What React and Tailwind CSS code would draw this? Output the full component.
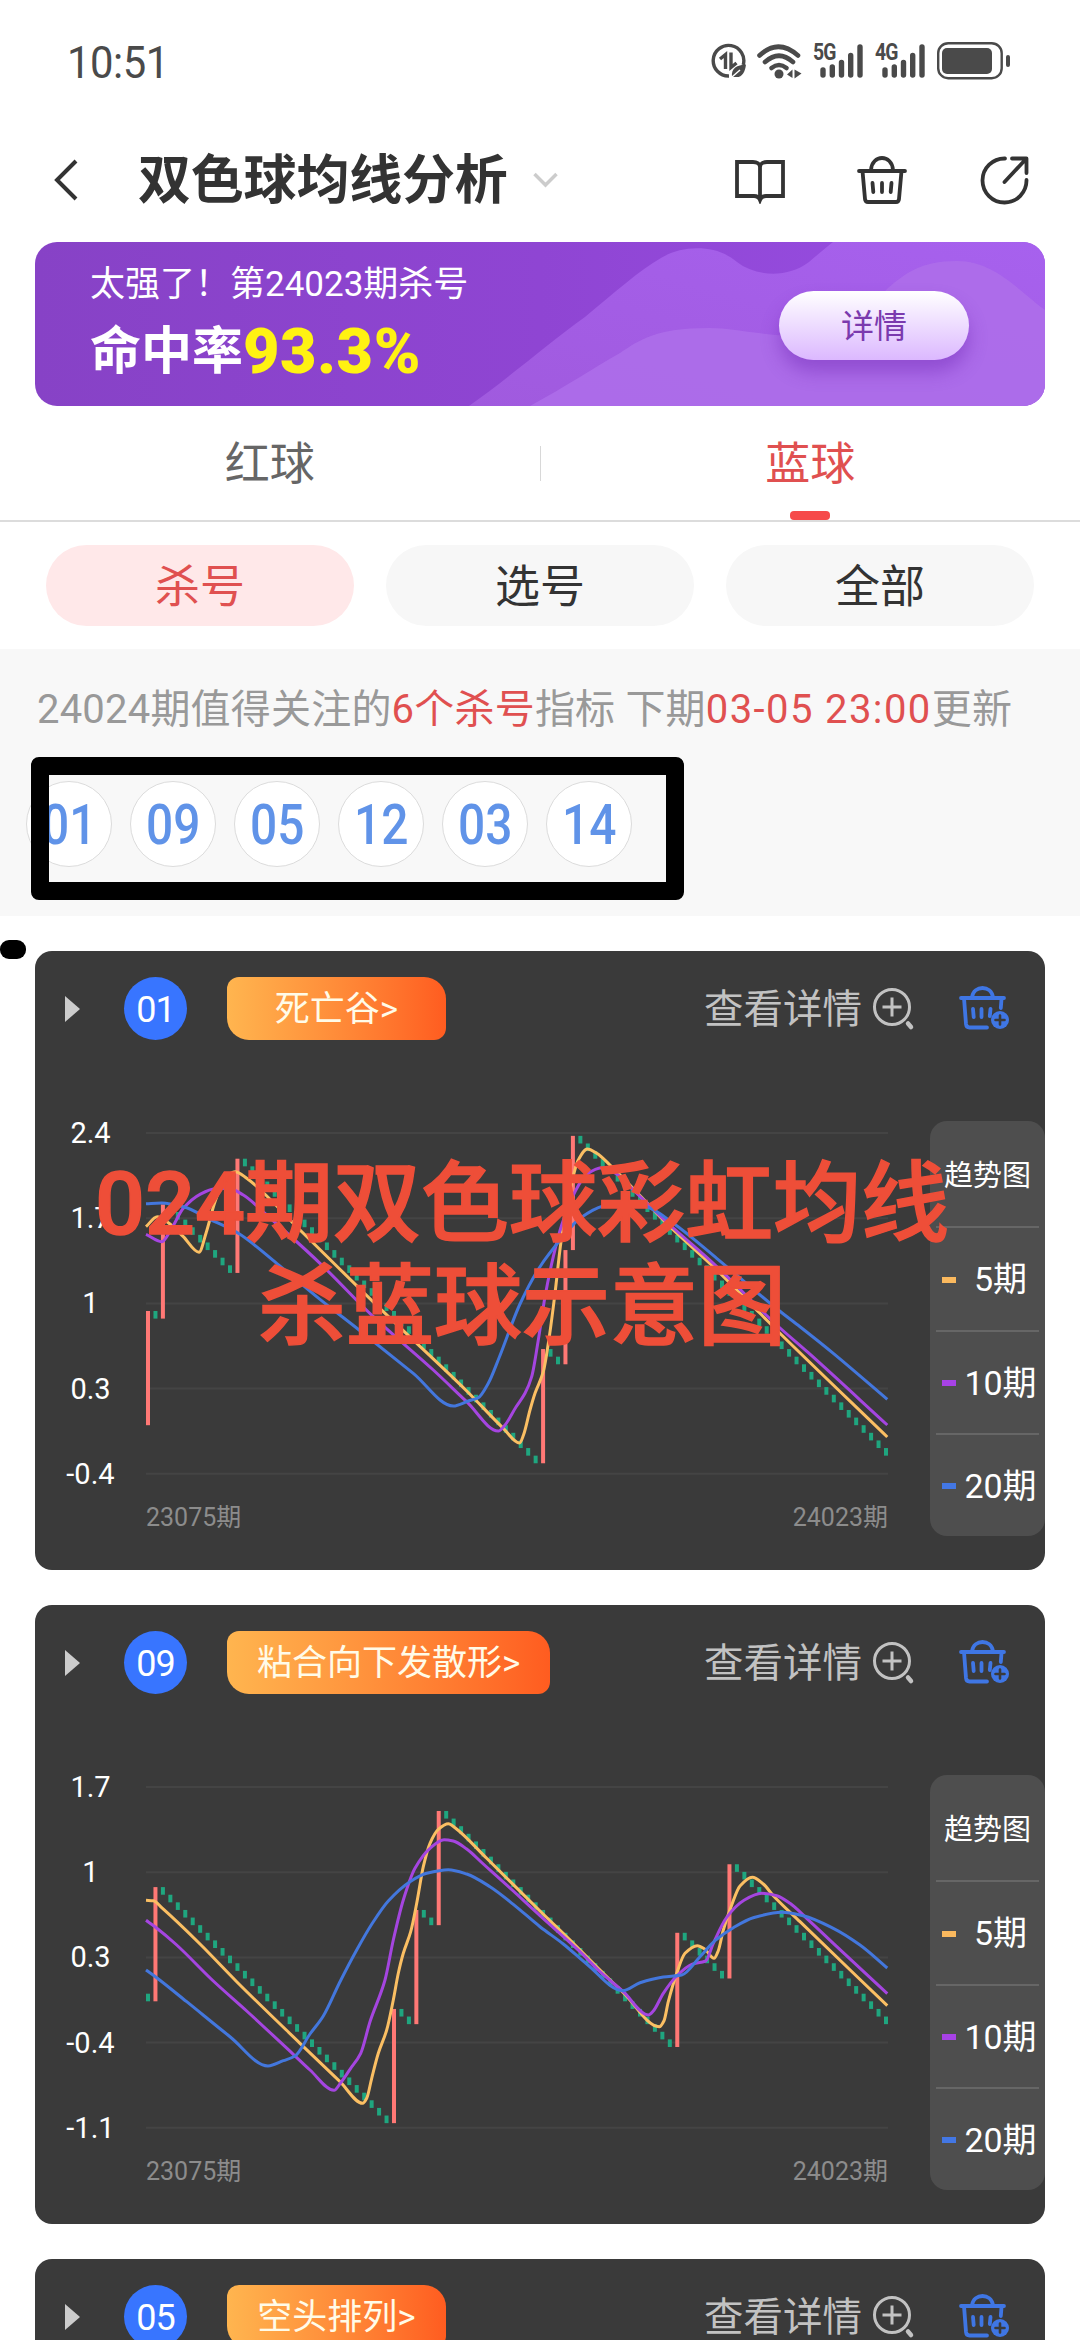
const RED = "#ff7875";
const GREEN = "#1fa67f";

// one miss lowers the line by 1/16, one hit raises it by 15/16
const STEP = 7.614;
const BAR_GAP = 7.4545;
const TOTAL = 100;

const charts = [
  {
    num: "01",
    tag: "死亡谷>",
    labels: ["2.4", "1.7", "1", "0.3", "-0.4"],
    open: 474.2,
    hits: [0, 2, 12, 53, 56, 57],
    ma5: [
      [146, 275.7], [157.3, 265.7], [168.3, 271.7], [183.3, 285.7], [199, 301.3], [206, 282.3], [215, 250.7],
      [225, 227.3], [235, 220.7], [246.7, 227.3], [300, 279], [383.3, 360.7], [466.7, 440], [503.3, 477.3],
      [519.5, 492], [523.5, 484], [530, 459], [535, 442.3], [543.3, 420.7], [549.3, 385.7], [555, 342.3],
      [561, 290.7], [570, 239], [578.3, 209], [587.3, 198], [596.7, 202.3], [610, 214], [670, 275.7],
      [713.3, 315.7], [760, 362.3], [781.7, 384], [887.3, 486],
    ],
    ma10: [
      [146, 283.3], [161.7, 290.7], [171.7, 277.3], [183.3, 257.3], [200, 243.3], [215, 237.7], [228.3, 237.3],
      [243.3, 244], [266.7, 264], [320, 312.3], [373.3, 365.7], [433.3, 419], [466.7, 450.7], [498.3, 480],
      [505, 474], [516, 456], [525, 442.3], [531.7, 425.7], [538.3, 389], [545, 345.7], [553.3, 305.7],
      [561.7, 274], [575, 240.7], [586.7, 223.3], [601.7, 216.7], [616.7, 223], [633.3, 239], [670, 274],
      [713.3, 312.3], [776.7, 374], [808.3, 401.7], [887.3, 474],
    ],
    ma20: [
      [146, 252.7], [161.7, 252], [183.3, 255.7], [210, 268.3], [238.3, 282.3], [276.7, 312.3], [320, 348.3],
      [360, 379.7], [413.3, 422.3], [453.3, 455], [468.3, 450], [478.3, 446.7], [488.3, 432.3], [499, 407],
      [520, 353], [540, 315.7], [561.7, 287.3], [580, 267.3], [603.3, 255], [623, 251.7], [646.7, 255.7],
      [673.3, 272.3], [716.7, 307.3], [778.3, 359], [800, 375.7], [833.3, 402.3], [887.3, 448.3],
    ],
  },
  {
    num: "09",
    tag: "粘合向下发散形>",
    labels: ["1.7", "1", "0.3", "-0.4", "-1.1"],
    open: 388.7,
    hits: [1, 33, 36, 39, 71, 78],
    ma5: [
      [146, 295.3], [153.3, 295.7], [161.7, 302.7], [200, 339], [236.7, 376.7], [300, 438.3], [340, 476.7],
      [362.7, 498.3], [366.7, 493.3], [371.7, 473.3], [378.3, 448.3], [386.7, 425], [393.3, 395], [398.3, 368.3],
      [403.3, 348.3], [410.7, 326.7], [416.7, 298.3], [423.3, 261.7], [430, 238.3], [438.3, 224.3],
      [448.3, 218.7], [455, 222.7], [486.7, 253.3], [540, 306], [573.3, 338.3], [600, 365], [623.3, 387.7],
      [659.3, 421.7], [664, 415.7], [668.3, 396.7], [676.7, 368.3], [685, 348.3], [697.3, 340.7],
      [705, 344.3], [714, 353.3], [718.3, 345.7], [723.3, 325], [731.7, 300], [740, 281], [752.3, 272.3],
      [763.3, 279], [773.3, 290.7], [800, 316.7], [887.3, 400.7],
    ],
    ma10: [
      [146, 315.3], [155, 321.7], [176.7, 340], [213.3, 376], [246.7, 406], [293.3, 449.3], [310, 465],
      [334, 485.3], [340.7, 477.7], [350, 464.3], [360.7, 448.3], [370, 416.7], [385, 375], [393.3, 335],
      [403.3, 295], [415, 263.3], [430, 243.3], [444, 234.7], [453.3, 236], [466.7, 244], [483.3, 259],
      [513.3, 286], [540, 310.7], [580, 346.7], [600, 366.7], [623.3, 386.7], [648.3, 410], [653.3, 406],
      [663.3, 388.3], [676.7, 371], [691.7, 359.3], [705.7, 356], [713.3, 338.3], [726.7, 312.3],
      [743.3, 295.7], [761.7, 288.3], [776.7, 290.7], [790, 298.3], [806.7, 313.3], [833.3, 338.3], [887.3, 388.7],
    ],
    ma20: [
      [146, 365], [156.7, 372.7], [186.7, 396.7], [230, 431.7], [268, 461], [283.3, 455.7], [295, 451],
      [310, 429], [323.3, 411], [340, 376.7], [356.7, 345], [371.7, 319.3], [388.3, 296], [410, 276.7],
      [426.7, 268.3], [448.3, 264.7], [466.7, 269], [490, 281.7], [513.3, 299.3], [540, 321.7], [563.3, 339],
      [586.7, 359], [622.7, 385.7], [640, 377.7], [663.3, 372], [681.7, 370], [700, 351.7], [715, 335.7],
      [733.3, 322.7], [753.3, 312.7], [781.7, 307.3], [803.3, 310.7], [833.3, 323.3], [860, 340], [887.3, 363],
    ],
  },
  // below the fold, only its header is visible
  {
    num: "05",
    tag: "空头排列>",
    labels: [],
    open: 300,
    hits: [20],
    ma5: [],
    ma10: [],
    ma20: [],
  },
];

const balls = ["01", "09", "05", "12", "03", "14"];

const getBars = (open, hits) => {
  const bars = [];
  let last = open;
  for (let i = 0; i < TOTAL; i++) {
    const hit = hits.includes(i);
    const close = hit ? last - STEP * 15 : last + STEP;
    bars.push({
      x: 146 + i * BAR_GAP,
      y: Math.min(last, close),
      h: Math.abs(close - last),
      color: hit ? RED : GREEN,
    });
    last = close;
  }
  return bars;
};

// smooth line, tangents limited by the shorter neighbour segment
const getPath = (pts) => {
  if (!pts.length) return "";
  let d = `M${pts[0][0]} ${pts[0][1]}`;
  const slope = (i) => {
    const a = pts[Math.max(0, i - 1)];
    const b = pts[Math.min(pts.length - 1, i + 1)];
    const p = pts[i];
    const s1 = (p[1] - a[1]) / (p[0] - a[0] || 1);
    const s2 = (b[1] - p[1]) / (b[0] - p[0] || 1);
    if (i === 0) return s2;
    if (i === pts.length - 1) return s1;
    return s1 * s2 <= 0 ? 0 : (2 * s1 * s2) / (s1 + s2);
  };
  for (let i = 0; i < pts.length - 1; i++) {
    const p = pts[i];
    const q = pts[i + 1];
    const dx = (q[0] - p[0]) / 3;
    d += `C${p[0] + dx} ${p[1] + slope(i) * dx} ${q[0] - dx} ${q[1] - slope(i + 1) * dx} ${q[0]} ${q[1]}`;
  }
  return d;
};

function SignalBars({ label }) {
  return (
    <div className="relative h-[36px] w-[50px]">
      <span className="absolute left-0 -top-[1px] text-[23px] leading-[22px] font-bold tracking-[-1px] origin-left scale-x-[0.84]">
        {label}
      </span>
      <svg className="absolute inset-0" width="50" height="36" viewBox="0 0 50 36">
        <g stroke="#4a4a4a" strokeWidth="5.4" strokeLinecap="round">
          <path d="M10 27v5M19.3 24v8M28.5 19.500v12.500M37.700 12.500v19.500M47 4v28" />
        </g>
      </svg>
    </div>
  );
}

function StatusBar() {
  return (
    <div className="flex h-[124px] shrink-0 items-center justify-between pl-[67px] pr-[69px] text-[#4a4a4a]">
      <span className="mt-[2px] text-[44px] tracking-[-0.5px] leading-none origin-left scale-x-[0.95]">10:51</span>
      <div className="flex items-center -mt-[2px]">
        <svg width="36" height="36" viewBox="0 0 36 36" fill="none" stroke="#4a4a4a">
          <path d="M18 33A15.300 15.300 0 1 1 32.200 22" strokeWidth="3.400" />
          <path d="M9 16l5.500-4.500V26M20 9.500v15l5.500-4.500" strokeWidth="3.400" />
          <path d="M21 34c-1-9 5-12 14-12.500-1 8-4 13.500-11 12.500z" fill="#4a4a4a" stroke="none" />
          <path d="M21 34l8-7" stroke="#fff" strokeWidth="1.500" />
        </svg>
        <svg className="ml-[9px]" width="46" height="36" viewBox="0 0 46 36" fill="none" stroke="#4a4a4a">
          <g strokeWidth="4.600" strokeLinecap="round">
            <path d="M3.500 12.500Q22 -5 42 12.500" />
            <path d="M9 19Q23 6.500 37 19" />
            <path d="M15.500 25Q23 19 30.500 25" />
          </g>
          <circle cx="23" cy="31" r="4.500" fill="#4a4a4a" stroke="none" />
          <path d="M31 31.500l5.500-5V35zM38.500 26.500l7 4-7 5z" fill="#4a4a4a" stroke="none" />
        </svg>
        <div className="ml-[11px]">
          <SignalBars label="5G" />
        </div>
        <div className="ml-[12px]">
          <SignalBars label="4G" />
        </div>
        <svg className="ml-[12px]" width="74" height="38" viewBox="0 0 74 38">
          <rect x="1.200" y="1.200" width="63.500" height="35" rx="10" fill="none" stroke="#4a4a4a" strokeWidth="2.400" />
          <rect x="5" y="6" width="50" height="26" rx="5" fill="#4a4a4a" />
          <rect x="69" y="13" width="4" height="12" rx="2" fill="#4a4a4a" />
        </svg>
      </div>
    </div>
  );
}

function Header() {
  return (
    <div className="flex h-[118px] shrink-0 items-center pb-[6px] pl-[52px] pr-[50px]">
      <svg width="28" height="44" viewBox="0 0 28 44" fill="none" stroke="#333" strokeWidth="4">
        <path d="M24 3L5 22l19 19" />
      </svg>
      <h1 className="ml-[58px] pt-[2px] text-[53px] leading-none font-bold tracking-[-0.2px] text-[#333]">双色球均线分析</h1>
      <svg className="ml-[25px]" width="25" height="16" viewBox="0 0 25 16" fill="none" stroke="#ccc" strokeWidth="3.500">
        <path d="M1.500 2l11 11 11-11" />
      </svg>
      <div className="ml-auto flex items-center">
        <svg width="52" height="48" viewBox="0 0 52 48" fill="none" stroke="#333" strokeWidth="3.800">
          <path d="M26 44c-1-2.500-3-4-6-4H3V6h16c4 0 7 2 7 5 0-3 3-5 7-5h16v34H32c-3 0-5 1.500-6 4zM26 10v32" />
        </svg>
        <svg className="ml-[71px]" width="50" height="48" viewBox="0 0 50 48" fill="none" stroke="#333" strokeWidth="3.800" strokeLinecap="round" strokeLinejoin="round">
          <path d="M2 15h46M5.500 15l2.500 28q.3 3 3 3h28q2.700 0 3-3l2.500-28M14 14c1-16 21-16 22 0M15.500 27l.8 9M25 27v9M34.500 27l-.8 9" />
        </svg>
        <svg className="ml-[73px]" width="50" height="50" viewBox="0 0 50 50" fill="none" stroke="#333" strokeWidth="3.800" strokeLinecap="round" strokeLinejoin="round">
          <path d="M25 3.500A22 22 0 1 0 46.500 25M32 3.500h14.500V18M46 4L24.500 27" />
        </svg>
      </div>
    </div>
  );
}

function Banner() {
  return (
    <div className="relative mx-[35px] flex h-[164px] shrink-0 items-center justify-between overflow-hidden rounded-[22px] bg-gradient-to-r from-[#8742c6] via-[#8f45d3] to-[#984fe4] pl-[55px] pr-[76px]">
      <svg className="absolute inset-0" width="1010" height="164" viewBox="0 0 1010 164">
        <defs>
          <linearGradient id="wave" x1="0" x2="1" y1="1" y2="0">
            <stop offset="0" stopColor="#a05ade" />
            <stop offset="1" stopColor="#a761ee" />
          </linearGradient>
        </defs>
        <path d="M434 164C475 135 515 100 550 75C580 50 605 28 626 16C645 4 680 1 702 20C720 34 752 37 774 20Q788 8 798 0H1010V164z" fill="url(#wave)" />
        <path d="M495 164C530 145 560 125 585 111C605 98 620 86 674 86C700 86 730 94 760 94C800 94 835 65 853 46C870 32 885 19 922 19C960 19 985 50 1010 68V164z" fill="#ae6eea" fillOpacity="0.85" />
      </svg>
      <div className="relative -mt-[4px]">
        <p className="text-[35px] leading-[42px] text-white">太强了！第24023期杀号</p>
        <p className="mt-[16px] flex h-[58px] items-center text-[51px] leading-none font-bold text-white">
          命中率
          <span className="text-[63px] font-black tracking-[0.5px] text-[#fff212]">93.3%</span>
        </p>
      </div>
      <button className="relative mt-[2px] h-[69px] w-[190px] rounded-full bg-gradient-to-b from-white to-[#dcb8ff] pt-[4px] text-[33px] text-[#7b3aae] shadow-[0_12px_18px_rgba(110,40,180,0.45)]">
        详情
      </button>
    </div>
  );
}

function Tabs() {
  return (
    <div className="flex h-[116px] shrink-0 items-center border-b-2 border-[#dcdcdc] text-[45px] leading-none">
      <div className="flex-1 pt-[3px] text-center text-[#666]">红球</div>
      <div className="h-[35px] w-[1px] bg-[#d8d8d8]" />
      <div className="relative flex h-full flex-1 items-center justify-center pt-[3px] text-[#e05050]">
        蓝球
        <span className="absolute bottom-0 left-1/2 h-[9px] w-[40px] -translate-x-1/2 rounded-[4px] bg-[#f64a4a]" />
      </div>
    </div>
  );
}

function CartPlus() {
  return (
    <svg width="52" height="46" viewBox="0 0 52 46" fill="none" stroke="#3f76e4" strokeWidth="3.800" strokeLinecap="round" strokeLinejoin="round">
      <path d="M2 13h43M5 13l2 26q.4 3.500 3.500 3.500H28M42.500 14l-.7 9M13 12c2-12 19-12 21 0M14 24l.7 8M22.500 24v8M31.500 24l-.7 7" />
      <circle cx="41" cy="35" r="9" fill="#3f76e4" stroke="none" />
      <path d="M41 30.500v9M36.500 35h9" stroke="#3a3a3a" strokeWidth="2.600" />
    </svg>
  );
}

function LegendRow({ color, children }) {
  return (
    <div className="relative flex flex-1 items-center justify-center border-t-2 border-[#666] pl-[26px] pt-[2px] text-[34px]">
      <i className={`absolute left-[6px] h-[6px] w-[14px] ${color}`} />
      <span>{children}</span>
    </div>
  );
}

function ChartCard({ data }) {
  return (
    <div className="relative mx-[35px] h-[619px] shrink-0 overflow-hidden rounded-[17px] bg-[#3a3a3a]">
      <div className="flex h-[63px] items-center mt-[26px] pl-[30px] pr-[34px]">
        <svg width="15" height="26" viewBox="0 0 15 26">
          <path d="M0 0l15 13L0 26z" fill="#ccc" />
        </svg>
        <span className="ml-[44px] flex h-[63px] w-[63px] items-center justify-center rounded-full bg-[#3875ff] pt-[2px] text-[36px] tracking-[-1px] text-white">
          {data.num}
        </span>
        <span className="ml-[40px] flex h-[63px] min-w-[219px] items-center justify-center whitespace-nowrap rounded-[22px] rounded-tl-[12px] rounded-br-[12px] bg-gradient-to-r from-[#ffb54f] to-[#ff5c20] px-[30px] pt-[4px] text-[35px] text-[#fffbe8]">
          {data.tag}
        </span>
        <div className="ml-auto flex items-center text-[39.5px] leading-none text-[#c2c2c2]">
          <span className="pt-[2px]">查看详情</span>
          <svg className="ml-[10px]" width="44" height="44" viewBox="0 0 44 44" fill="none" stroke="#c2c2c2" strokeWidth="3">
            <circle cx="20" cy="20" r="17.500" />
            <path d="M20 10.500v19M10.500 20h19" />
            <path d="M36 36.500l3 3.500" strokeWidth="4.500" strokeLinecap="round" />
          </svg>
        </div>
        <div className="ml-[43px] -mt-[2px]">
          <CartPlus />
        </div>
      </div>

      <div className="mt-[81px] flex h-[415px]">
        {/* Y axis */}
        <div className="-mt-[30px] flex w-[111px] flex-col items-center">
          {data.labels.map((l) => (
            <span key={l} className="flex h-[85.2px] shrink-0 items-center text-[29px] leading-none text-white">
              {l}
            </span>
          ))}
        </div>
        <div className="flex w-[742px] flex-col pt-[12px]">
          <svg className="shrink-0 overflow-visible" width="742" height="342" viewBox="146 182 742 342" fill="none">
            {[0, 1, 2, 3, 4].map((i) => (
              <path key={i} d={`M146 ${182 + i * 85.2}h742`} stroke="#444" strokeWidth="2" />
            ))}
            {getBars(data.open, data.hits).map((b, i) => (
              <rect key={i} x={b.x} y={b.y} width="4" height={b.h} fill={b.color} />
            ))}
            <path d={getPath(data.ma5)} stroke="#fbbf63" strokeWidth="3" />
            <path d={getPath(data.ma10)} stroke="#a545e0" strokeWidth="3" />
            <path d={getPath(data.ma20)} stroke="#4377dd" strokeWidth="3" />
          </svg>
          <div className="mt-[29px] flex justify-between text-[25px] leading-[28px] text-[#8c8c8c]">
            <span>23075期</span>
            <span>24023期</span>
          </div>
        </div>
        {/* Legend */}
        <div className="ml-auto flex w-[115px] flex-col rounded-[17px] bg-[#4e4e4e] px-[6px] text-white">
          <div className="flex flex-1 items-center justify-center pt-[6px] text-[29px]">趋势图</div>
          <LegendRow color="bg-[#fbb95e]">5期</LegendRow>
          <LegendRow color="bg-[#a742e6]">10期</LegendRow>
          <LegendRow color="bg-[#4377e4]">20期</LegendRow>
        </div>
      </div>
    </div>
  );
}

export default function App() {
  return (
    <div className="relative flex h-[2340px] w-[1080px] flex-col overflow-hidden bg-white font-[Roboto,'Noto_Sans_CJK_SC',sans-serif]">
      <StatusBar />
      <Header />
      <Banner />
      <Tabs />

      {/* Filter */}
      <div className="flex h-[127px] shrink-0 items-center gap-[32px] px-[46px] text-[45px] leading-none text-[#333]">
        <div className="flex h-[81px] flex-1 items-center justify-center rounded-full bg-[#ffe8e9] pt-[4px] text-[#e05050]">杀号</div>
        <div className="flex h-[81px] flex-1 items-center justify-center rounded-full bg-[#f7f7f7] pt-[4px]">选号</div>
        <div className="flex h-[81px] flex-1 items-center justify-center rounded-full bg-[#f7f7f7] pt-[4px]">全部</div>
      </div>

      {/* Numbers */}
      <div className="relative h-[267px] shrink-0 bg-[#f8f8f8] pt-[36px]">
        <p className="whitespace-nowrap pl-[37px] text-[40px] leading-[50px] tracking-[0.2px] text-[#999]">
          24024期值得关注的<span className="text-[#e05050]">6个杀号</span>指标 下期
          <span className="tracking-[1.4px] text-[#e05050]">03-05 23:00</span>更新
        </p>
        <div className="mt-[46px] ml-[26px] flex gap-[18px]">
          {balls.map((b) => (
            <div key={b} className="flex h-[86px] w-[86px] items-center justify-center rounded-full border border-[#dcdcdc] bg-white pt-[3px]">
              <span className="scale-x-[0.87] text-[55px] leading-none font-medium text-[#6093e8]">{b}</span>
            </div>
          ))}
        </div>
        <div className="absolute left-[31px] top-[108px] h-[143px] w-[653px] rounded-[8px] border-[18px] border-black" />
      </div>

      <div className="flex flex-col gap-[35px] pt-[35px]">
        {charts.map((c) => (
          <ChartCard key={c.num} data={c} />
        ))}
      </div>

      <span className="absolute left-0 top-[940px] h-[19px] w-[26px] rounded-[9px] bg-black" />
      <div className="absolute left-0 top-[1152px] w-[1044px] text-center text-[88px] leading-[103px] font-medium text-[#ee4e38] [-webkit-text-stroke:1.5px_#ee4e38]">
        <p>024期双色球彩虹均线</p>
        <p>杀蓝球示意图</p>
      </div>
    </div>
  );
}
